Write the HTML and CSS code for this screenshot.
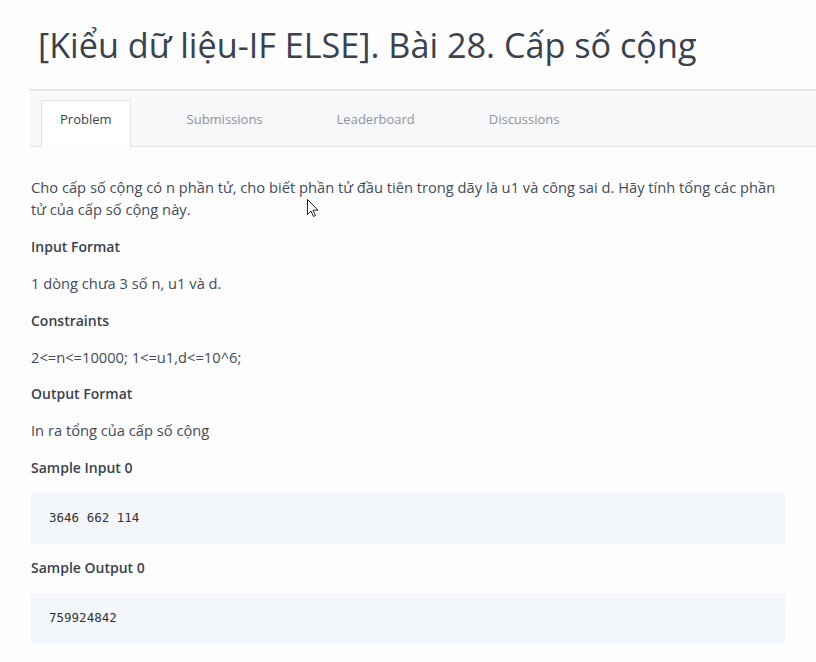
FILE: index.html
```html
<!DOCTYPE html>
<html lang="vi">
<head>
<meta charset="utf-8">
<title>Bài 28. Cấp số cộng</title>
<link rel="stylesheet" href="styles.css">
</head>
<body>
<div class="page">
  <h1 class="title">[Kiểu dữ liệu-IF ELSE]. Bài 28. Cấp số cộng</h1>
  <nav class="tabs">
    <a class="tab active">Problem</a>
    <a class="tab">Submissions</a>
    <a class="tab">Leaderboard</a>
    <a class="tab">Discussions</a>
  </nav>
  <div class="content">
    <p class="text intro">Cho cấp số cộng có n phần tử, cho biết phần tử đầu tiên trong dãy là u1 và công sai d. Hãy tính tổng các phần tử của cấp số cộng này.</p>
    <h3 class="heading">Input Format</h3>
    <p class="text">1 dòng chưa 3 số n, u1 và d.</p>
    <h3 class="heading">Constraints</h3>
    <p class="text">2&lt;=n&lt;=10000; 1&lt;=u1,d&lt;=10^6;</p>
    <h3 class="heading">Output Format</h3>
    <p class="text">In ra tổng của cấp số cộng</p>
    <h3 class="heading">Sample Input 0</h3>
    <pre class="code">3646 662 114</pre>
    <h3 class="heading">Sample Output 0</h3>
    <pre class="code">759924842</pre>
  </div>
  <svg class="cursor" width="12" height="19" viewBox="0 0 12 19"><path d="M0.5 0.5 L0.5 15.5 L4 12 L6.5 17.5 L8.5 16.5 L6 11.2 L11 11.2 Z" fill="#fff" stroke="#222" stroke-width="1"/></svg>
</div>
</body>
</html>
```
FILE: styles.css
```css
html, body {
  margin: 0;
  padding: 0;
  background: #fdfdfe;
  overflow: hidden;
}
.page {
  position: relative;
  font-family: "Open Sans", "Noto Sans", sans-serif;
  color: #39424e;
  padding: 0 31px;
  width: 754px;
}
.title {
  margin: 0;
  padding: 22px 0 0 7px;
  font-size: 34.2px;
  font-weight: 400;
  line-height: 46px;
  color: #39424e;
}
.tabs {
  display: flex;
  gap: 38px;
  margin: 21px -80px 0 -1px;
  padding: 9px 0 0 11px;
  height: 46px;
  background: #f7f8fa;
  border-top: 2px solid #e6e8eb;
  border-bottom: 1px solid #e3e5e8;
  box-sizing: content-box;
}
.tab {
  display: block;
  padding: 10.5px 18px 0 18px;
  font-size: 13px;
  line-height: 16px;
  color: #8a939e;
  margin-bottom: -1px;
}
.tab.active {
  background: #fff;
  color: #39424e;
  border: 1px solid #e3e5e8;
  border-bottom: none;
  padding-top: 9.5px;
}
.content {
  padding-top: 29px;
}
.text {
  margin: 0 0 15.5px;
  font-size: 14.7px;
  line-height: 22px;
  color: #444c57;
}
.text.intro {
  margin-bottom: 16px;
}
.heading {
  margin: 0 0 14px;
  font-size: 14px;
  font-weight: 600;
  line-height: 22px;
  color: #39424e;
}
.code {
  margin: 6.5px 0 13px;
  padding: 14.5px 18px;
  background: #f3f7fb;
  font-family: "DejaVu Sans Mono", monospace;
  font-size: 12.5px;
  line-height: 22px;
  color: #333;
}
.cursor {
  position: absolute;
  left: 307px;
  top: 199px;
}
```
